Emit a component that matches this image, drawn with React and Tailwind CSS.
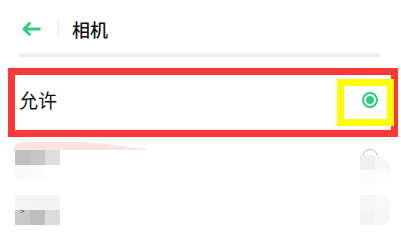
import React from "react";

const font = { fontFamily: '"Noto Sans CJK SC", "Noto Sans", sans-serif' };

function Block({ c }) {
  return <div className="w-[15px] h-[15px]" style={{ backgroundColor: c }} />;
}

export default function App() {
  return (
    <div className="relative w-[401px] h-[247px] bg-white overflow-hidden" style={font}>
      {/* header */}
      <div className="h-[53px] pt-[4px] flex items-center pl-[22px]">
        <svg width="19" height="14" viewBox="0 0 19 14" fill="none">
          <path d="M17.5 7H2.5M7.5 1.5L2 7l5.5 5.5" stroke="#2ecc7c" strokeWidth="2.8" strokeLinecap="round" strokeLinejoin="round" />
        </svg>
        <div className="ml-[17px] w-px h-[17px] bg-[#e6e6e6]" />
        <div className="ml-[13px] text-[18px] leading-none font-medium text-[#111]">相机</div>
      </div>
      <div className="ml-[19px] w-[361px] h-[4px] bg-[#efefef]" />

      {/* row 1 */}
      <div className="h-[85px] flex items-center justify-between pl-[19px] pr-[23px]">
        <div className="text-[19px] leading-none text-[#111]">允许</div>
        <div className="w-[16px] h-[16px] rounded-full border-[2px] border-[#2ecc7c] flex items-center justify-center">
          <div className="w-[8px] h-[8px] rounded-full bg-[#2ecc7c]" />
        </div>
      </div>

      {/* row 2 */}
      <div className="relative h-[50px] flex justify-between pl-[15px] pr-[11px]">
        <div className="pt-[8px] grid grid-cols-3 h-fit">
          <Block c="#c0c0c0" />
          <Block c="#c5c5c5" />
          <Block c="#dddddd" />
          <Block c="#fafafa" />
          <Block c="#fcfcfc" />
          <Block c="#ffffff" />
        </div>
        <div className="relative w-[30px] pt-[13px]">
          <div className="absolute left-[2px] top-[7px] w-[16px] h-[16px] rounded-full border border-[#bdbdbd]" />
          <div className="relative grid grid-cols-2 w-[30px]">
            <Block c="#f0f0f0" />
            <div className="w-[15px] h-[15px] bg-[#f7f7f7] [clip-path:polygon(0_0,30%_0,100%_60%,100%_100%,0_100%)]" />
            <Block c="#fbfbfb" />
            <div className="w-[15px] h-[15px] bg-[#fdfdfd]" />
          </div>
        </div>
      </div>

      {/* row 3 */}
      <div className="h-[55px] flex justify-between pl-[15px] pr-[11px] pt-[3px]">
        <div className="relative grid grid-cols-3 h-fit">
          <Block c="#f5f5f5" />
          <Block c="#f3f3f3" />
          <Block c="#f3f3f3" />
          <Block c="#c9c9c9" />
          <Block c="#bdbdbd" />
          <Block c="#dcdcdc" />
          <div className="absolute left-[5px] top-[12px] text-[8px] leading-none text-[#333]">&gt;</div>
        </div>
        <div className="grid grid-cols-2 w-[30px] h-fit rounded-r-[8px] overflow-hidden">
          <Block c="#f6f6f6" />
          <Block c="#f9f9f9" />
          <Block c="#f3f3f3" />
          <Block c="#f7f7f7" />
        </div>
      </div>

      {/* pink smear */}
      <svg className="absolute left-0 top-[140px]" width="160" height="12" viewBox="0 0 160 12">
        <path d="M12 10 C14 5 18 3 24 2 L80 2 C100 3 120 6 146 9 L146 10 Z" fill="#fde2e2" />
      </svg>

      {/* annotation boxes */}
      <div className="absolute left-[8px] top-[68px] w-[390px] h-[69px] border-[7px] border-[#fd3838]" />
      <div className="absolute left-[337px] top-[79px] w-[57px] h-[47px] border-[7px] border-[#ffff00]" />
    </div>
  );
}
